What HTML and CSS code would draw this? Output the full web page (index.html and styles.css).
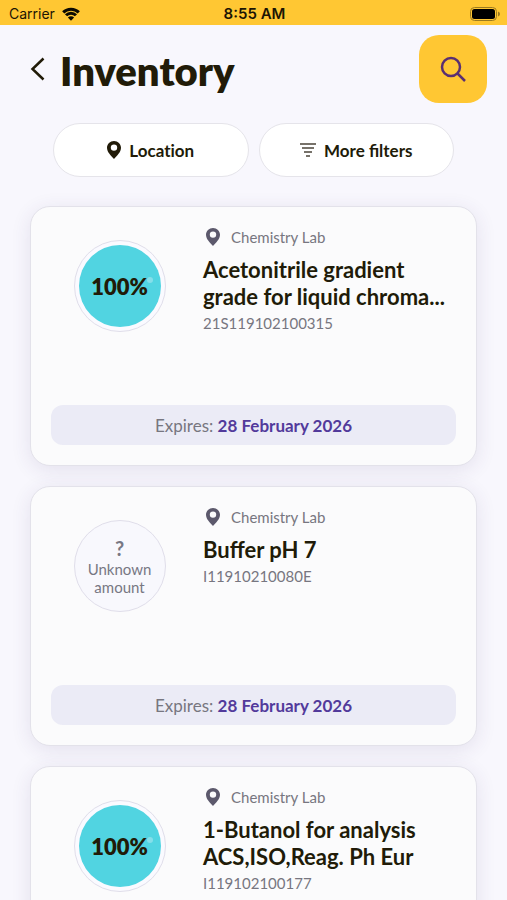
FILE: index.html
```html
<!DOCTYPE html>
<html lang="en">
<head>
<meta charset="utf-8">
<meta name="viewport" content="width=device-width, initial-scale=1">
<title>Inventory</title>
<link rel="stylesheet" href="styles.css">
</head>
<body>
<svg class="sprite" aria-hidden="true">
  <symbol id="pin" viewBox="0 0 14 18">
    <path fill-rule="evenodd" d="M7 0C3.1 0 0 3 0 6.8C0 11.2 4.2 14.8 7 18C9.8 14.8 14 11.2 14 6.8C14 3 10.9 0 7 0ZM7 3.4A3.2 3.2 0 1 1 7 9.8A3.2 3.2 0 1 1 7 3.4Z"/>
  </symbol>
</svg>
<div class="app">
  <div class="status">
    <div class="status-left">
      <span>Carrier</span>
      <svg class="wifi" viewBox="0 0 18 14" aria-hidden="true">
        <path d="M1.2 5.4A11 11 0 0 1 16.800 5.400M4 8.300A7 7 0 0 1 14 8.300"/>
        <path class="solid" d="M9 13.800L5.900 10.600A4.400 4.400 0 0 1 12.100 10.600Z"/>
      </svg>
    </div>
    <span class="clock">8:55 AM</span>
    <div class="status-right">
      <svg class="battery" viewBox="0 0 30 14" aria-hidden="true">
        <rect class="shell" x="0.500" y="0.500" width="26" height="13" rx="4"/>
        <rect x="2" y="2" width="23" height="10" rx="2.500"/>
        <path class="tip" d="M28 4.500Q30 5.200 30 7Q30 8.800 28 9.500Z"/>
      </svg>
    </div>
  </div>

  <header class="header">
    <a class="back" href="#" aria-label="Back">
      <svg viewBox="0 0 14 24" aria-hidden="true"><path d="M13 1.500L2 12L13 22.500"/></svg>
    </a>
    <h1>Inventory</h1>
    <button class="search" type="button" aria-label="Search">
      <svg viewBox="0 0 26 26" aria-hidden="true"><circle cx="11" cy="11" r="9"/><path d="M17.500 17.500L25 25"/></svg>
    </button>
  </header>

  <div class="filters">
    <button class="filter" type="button">
      <svg class="pin" aria-hidden="true"><use href="#pin"/></svg>
      <span class="plain">Location</span>
    </button>
    <button class="filter" type="button">
      <svg class="lines" viewBox="0 0 16 14" aria-hidden="true"><path d="M0 1H16M2 5H14M4 9H12M6 13H10"/></svg>
      <span>More filters</span>
    </button>
  </div>

  <main class="list">
    <article class="card">
      <div class="info">
        <div class="amount"><span class="level">100%</span></div>
        <div class="details">
          <p class="place"><svg class="pin" aria-hidden="true"><use href="#pin"/></svg>Chemistry Lab</p>
          <h2>Acetonitrile gradient<br>grade for liquid chroma...</h2>
          <p class="code">21S119102100315</p>
        </div>
      </div>
      <p class="expires">Expires: <strong>28 February 2026</strong></p>
    </article>

    <article class="card">
      <div class="info">
        <div class="amount unknown"><b>?</b><span>Unknown</span><span>amount</span></div>
        <div class="details">
          <p class="place"><svg class="pin" aria-hidden="true"><use href="#pin"/></svg>Chemistry Lab</p>
          <h2>Buffer pH 7</h2>
          <p class="code">I11910210080E</p>
        </div>
      </div>
      <p class="expires">Expires: <strong>28 February 2026</strong></p>
    </article>

    <article class="card">
      <div class="info">
        <div class="amount"><span class="level">100%</span></div>
        <div class="details">
          <p class="place"><svg class="pin" aria-hidden="true"><use href="#pin"/></svg>Chemistry Lab</p>
          <h2>1-Butanol for analysis<br>ACS,ISO,Reag. Ph Eur</h2>
          <p class="code">I119102100177</p>
        </div>
      </div>
    </article>
  </main>
</div>
</body>
</html>
```
FILE: styles.css
```css
* {
  box-sizing: border-box;
}

body {
  margin: 0;
  background: #f8f7fd;
  color: #211b08;
  font-family: Lato, "Liberation Sans", sans-serif;
}

h1,
h2,
p {
  margin: 0;
}

button {
  border: 0;
  padding: 0;
  font: inherit;
  color: inherit;
  cursor: pointer;
}

.sprite {
  position: absolute;
  width: 0;
  height: 0;
}

.app {
  display: flex;
  flex-direction: column;
  height: 100vh;
  overflow: hidden;
}

.status {
  flex: none;
  display: grid;
  grid-template-columns: 1fr auto 1fr;
  align-items: center;
  height: 25px;
  padding: 2px 7px 0 9px;
  background: #ffc733;
  color: #1c1504;
  font: 14px/20px Inter, "Liberation Sans", sans-serif;
}

.status-left {
  display: flex;
  align-items: center;
  gap: 7px;
}

.wifi {
  width: 18px;
  height: 14px;
  fill: none;
  stroke: #0c0a02;
  stroke-width: 3;
}

.wifi .solid {
  fill: #0c0a02;
  stroke: none;
}

.clock {
  font-size: 15px;
  font-weight: 600;
}

.status-right {
  display: flex;
  justify-content: flex-end;
}

.battery {
  width: 30px;
  height: 14px;
}

.battery .shell {
  fill: none;
  stroke: #9b7a20;
}

.battery .tip {
  fill: #9b7a20;
}

.header {
  flex: none;
  display: flex;
  align-items: center;
  padding: 10px 20px 0 30px;
}

.back {
  display: flex;
  width: 30px;
}

.back svg {
  width: 15px;
  height: 24px;
  fill: none;
  stroke: #211b08;
  stroke-width: 2.5;
}

h1 {
  flex: 1;
  padding-top: 3px;
  font-size: 40px;
  line-height: 48px;
  font-weight: 800;
}

.search {
  display: grid;
  place-items: center;
  width: 68px;
  height: 68px;
  border-radius: 20px;
  background: #ffc733;
}

.search svg {
  width: 26px;
  height: 26px;
  fill: none;
  stroke: #5a2f72;
  stroke-width: 2.5;
}

.filters {
  flex: none;
  display: grid;
  grid-template-columns: 1fr 1fr;
  gap: 10px;
  padding: 20px 53px 29px;
}

.filter {
  display: flex;
  align-items: center;
  justify-content: center;
  gap: 8px;
  height: 54px;
  border: 1px solid #e5e4ea;
  border-radius: 27px;
  background: #fff;
  font-size: 17px;
  font-weight: 700;
}

.plain {
  font-variant-ligatures: none;
}

.pin {
  width: 14px;
  height: 18px;
  fill: #211b08;
}

.lines {
  width: 16px;
  height: 14px;
  stroke: #77726a;
  stroke-width: 2;
}

.list {
  display: grid;
  gap: 20px;
  padding: 0 30px;
}

.card {
  display: flex;
  flex-direction: column;
  justify-content: space-between;
  height: 260px;
  padding: 20px;
  border: 1px solid #e3e2ea;
  border-radius: 20px;
  background: #fbfbfc;
  box-shadow: 0 4px 20px rgba(60, 50, 110, 0.11);
}

.info {
  display: grid;
  grid-template-columns: 137px 1fr;
  column-gap: 15px;
}

.amount {
  display: flex;
  flex-direction: column;
  align-items: center;
  justify-content: center;
  justify-self: center;
  width: 92px;
  height: 92px;
  margin-top: 13px;
  border: 1px solid #e0deea;
  border-radius: 50%;
  background: #fafaff;
}

.level {
  position: relative;
  width: 82px;
  height: 82px;
  border-radius: 50%;
  background: #51d4e1;
  font-size: 22px;
  line-height: 84px;
  font-weight: 800;
  text-align: center;
}

.level::after {
  content: "";
  position: absolute;
  top: 32px;
  right: 8px;
  width: 6px;
  height: 6px;
  border-radius: 50%;
  background: #85dfea;
}

.unknown {
  background: #f8f8fd;
  color: #777783;
  font-size: 15px;
  line-height: 18px;
}

.unknown b {
  font-size: 20px;
  line-height: 24px;
}

.place {
  display: flex;
  align-items: center;
  gap: 11px;
  height: 20px;
  padding-left: 3px;
  color: #777680;
  font-size: 15px;
  line-height: 20px;
}

.place .pin {
  fill: #5c596c;
}

h2 {
  margin-top: 9px;
  font-size: 22px;
  line-height: 27px;
  font-weight: 700;
  white-space: nowrap;
}

.code {
  color: #777680;
  font-size: 15px;
  line-height: 27px;
}

.expires {
  height: 40px;
  border-radius: 12px;
  background: #ebebf6;
  color: #777680;
  font-size: 17px;
  line-height: 42px;
  text-align: center;
}

.expires strong {
  color: #523a9b;
  font-weight: 700;
}
```
